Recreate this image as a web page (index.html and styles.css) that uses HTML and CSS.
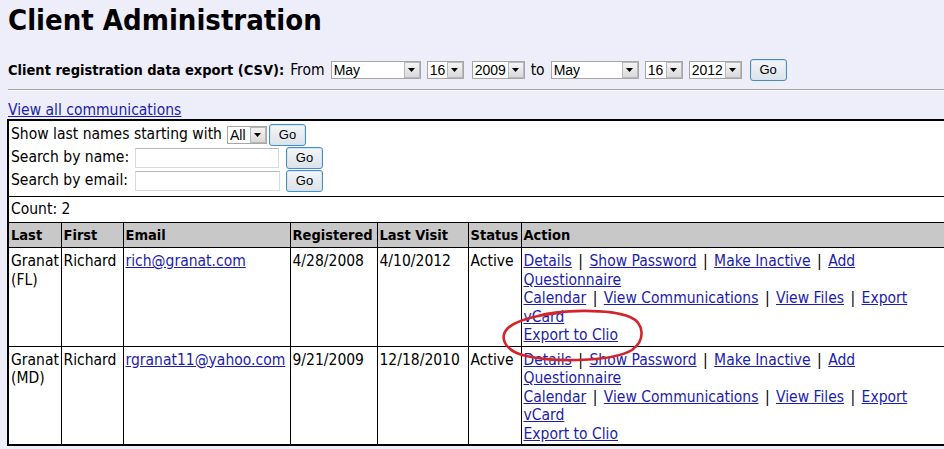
FILE: index.html
```html
<!DOCTYPE html>
<html lang="en">
<head>
<meta charset="utf-8">
<title>Client Administration</title>
<link rel="stylesheet" href="styles.css">
</head>
<body>
<h1 class="title">Client Administration</h1>

<form class="export">
  <span class="export-label">Client registration data export (CSV):</span>
  <span>From</span>
  <span class="dropdown dd-month"><select><option>May</option></select><span class="dd-btn" aria-hidden="true"><svg width="7" height="4" viewBox="0 0 7 4"><path d="M0 0H7L3.5 4Z"/></svg></span></span>
  <span class="dropdown dd-day"><select><option>16</option></select><span class="dd-btn" aria-hidden="true"><svg width="7" height="4" viewBox="0 0 7 4"><path d="M0 0H7L3.5 4Z"/></svg></span></span>
  <span class="dropdown dd-year dd-gap"><select><option>2009</option></select><span class="dd-btn" aria-hidden="true"><svg width="7" height="4" viewBox="0 0 7 4"><path d="M0 0H7L3.5 4Z"/></svg></span></span>
  <span>to</span>
  <span class="dropdown dd-month2"><select><option>May</option></select><span class="dd-btn" aria-hidden="true"><svg width="7" height="4" viewBox="0 0 7 4"><path d="M0 0H7L3.5 4Z"/></svg></span></span>
  <span class="dropdown dd-day2"><select><option>16</option></select><span class="dd-btn" aria-hidden="true"><svg width="7" height="4" viewBox="0 0 7 4"><path d="M0 0H7L3.5 4Z"/></svg></span></span>
  <span class="dropdown dd-year"><select><option>2012</option></select><span class="dd-btn" aria-hidden="true"><svg width="7" height="4" viewBox="0 0 7 4"><path d="M0 0H7L3.5 4Z"/></svg></span></span>
  <button type="button" class="btn">Go</button>
</form>

<hr class="rule">

<div class="view-all"><a href="#">View all communications</a></div>

<table class="clients">
  <colgroup>
    <col class="c-last"><col class="c-first"><col class="c-email"><col class="c-reg"><col class="c-visit"><col class="c-status"><col class="c-action">
  </colgroup>
  <tr>
    <td colspan="7" class="filters">
      <div class="filter-grid">
        <div class="filter-letter">
          <span>Show last names starting with</span>
          <span class="dropdown dd-letter"><select><option>All</option></select><span class="dd-btn" aria-hidden="true"><svg width="7" height="4" viewBox="0 0 7 4"><path d="M0 0H7L3.5 4Z"/></svg></span></span>
          <button type="button" class="btn btn-letter">Go</button>
        </div>
        <span class="filter-label">Search by name:</span>
        <input class="field" type="text">
        <button type="button" class="btn">Go</button>
        <span class="filter-label">Search by email:</span>
        <input class="field field-email" type="text">
        <button type="button" class="btn">Go</button>
      </div>
    </td>
  </tr>
  <tr>
    <td colspan="7" class="count">Count: 2</td>
  </tr>
  <tr class="head">
    <th>Last</th><th>First</th><th>Email</th><th>Registered</th><th>Last Visit</th><th>Status</th><th>Action</th>
  </tr>
  <tr class="row">
    <td>Granat (FL)</td>
    <td>Richard</td>
    <td><a href="#">rich@granat.com</a></td>
    <td>4/28/2008</td>
    <td>4/10/2012</td>
    <td>Active</td>
    <td class="actions">
      <div class="act-line"><a href="#">Details</a> <span class="sep">|</span> <a href="#">Show Password</a> <span class="sep">|</span> <a href="#">Make Inactive</a> <span class="sep">|</span> <a href="#">Add Questionnaire</a></div>
      <div class="act-line"><a href="#">Calendar</a> <span class="sep">|</span> <a href="#">View Communications</a> <span class="sep">|</span> <a href="#">View Files</a> <span class="sep">|</span> <a href="#">Export vCard</a></div>
      <div class="act-line"><a href="#">Export to Clio</a></div>
    </td>
  </tr>
  <tr class="row">
    <td>Granat (MD)</td>
    <td>Richard</td>
    <td><a href="#">rgranat11@yahoo.com</a></td>
    <td>9/21/2009</td>
    <td>12/18/2010</td>
    <td>Active</td>
    <td class="actions">
      <div class="act-line"><a href="#">Details</a> <span class="sep">|</span> <a href="#">Show Password</a> <span class="sep">|</span> <a href="#">Make Inactive</a> <span class="sep">|</span> <a href="#">Add Questionnaire</a></div>
      <div class="act-line"><a href="#">Calendar</a> <span class="sep">|</span> <a href="#">View Communications</a> <span class="sep">|</span> <a href="#">View Files</a> <span class="sep">|</span> <a href="#">Export vCard</a></div>
      <div class="act-line"><a href="#">Export to Clio</a></div>
    </td>
  </tr>
</table>

<svg class="annotation" width="150" height="58" viewBox="0 0 150 58" aria-hidden="true">
  <path d="M40 9C60 3 110 1 132 10C146 16 148 33 134 43C116 54 60 56 28 49C6 44 1 30 10 21C18 14 34 9 60 6" fill="none" stroke="#d3242b" stroke-width="2.6" stroke-linecap="round"/>
</svg>
</body>
</html>
```

FILE: styles.css
```css
html {
  overflow: hidden;
  background: #eeeefa;
}

body {
  position: relative;
  margin: 0;
  padding: 0 8px;
  width: 960px;
  font-family: "DejaVu Sans Condensed", "DejaVu Sans", sans-serif;
  font-stretch: condensed;
  font-size: 15.5px;
  line-height: 18.5px;
  color: #000;
}

a {
  color: #1d1dab;
  text-decoration: underline;
}

.title {
  margin: 3px 0 0;
  font-size: 29px;
  line-height: 34px;
  font-weight: bold;
}

.export {
  display: flex;
  align-items: center;
  gap: 6px;
  height: 22px;
  margin: 22px 0 0;
}

.export-label {
  font-weight: bold;
  font-size: 14.5px;
}

.dropdown {
  position: relative;
  display: inline-block;
  height: 18px;
  flex: none;
}

.dropdown select {
  appearance: none;
  -webkit-appearance: none;
  display: block;
  box-sizing: border-box;
  width: 100%;
  height: 18px;
  margin: 0;
  padding: 0 0 0 2px;
  border: 1px solid #a6a6a6;
  border-radius: 0;
  background: #fff;
  color: #000;
  font-family: "Liberation Sans", Arial, sans-serif;
  font-size: 14px;
  line-height: 16px;
}

.dd-btn {
  position: absolute;
  top: 1px;
  right: 1px;
  box-sizing: border-box;
  width: 16px;
  height: 16px;
  border: 1px solid #b9b9b9;
  background: linear-gradient(#f4f4f4, #d9d9d9);
  display: flex;
  align-items: center;
  justify-content: center;
  pointer-events: none;
}

.dd-btn svg {
  display: block;
  fill: #000;
}

.dd-month { width: 90px; }
.dd-month2 { width: 88px; }
.dd-day { width: 37px; }
.dd-day2 { width: 38px; }
.dd-year { width: 53px; }
.dd-letter { width: 40px; }
.dd-gap { margin-left: 2px; }

.btn {
  box-sizing: border-box;
  width: 37px;
  height: 22px;
  margin: 0;
  padding: 0;
  border: 1px solid #4a8bc2;
  border-radius: 3px;
  background: linear-gradient(#f4f6f8, #dce2e8);
  box-shadow: inset 0 0 0 1px #cfe6f6;
  color: #000;
  font-family: "Liberation Sans", Arial, sans-serif;
  font-size: 13px;
  line-height: 20px;
  flex: none;
}

.export .btn {
  margin-left: 2px;
}

.rule {
  height: 0;
  margin: 8px 0 0;
  border: 0;
  border-top: 1px solid #a3a3a8;
  border-bottom: 1px solid #fbfbff;
}

.view-all {
  margin-top: 10px;
  height: 18px;
}

.clients {
  table-layout: fixed;
  width: 953px;
  margin-left: -1px;
  border-collapse: collapse;
  border: 2px solid #000;
  background: #fff;
}

.c-last { width: 53px; }
.c-first { width: 62px; }
.c-email { width: 167px; }
.c-reg { width: 87px; }
.c-visit { width: 91px; }
.c-status { width: 53px; }
.c-action { width: 440px; }

.clients td,
.clients th {
  border: 1px solid #000;
  padding: 4px 2px 1px;
  text-align: left;
  vertical-align: top;
}

.clients .filters {
  padding: 2px 2px 4px;
}

.filter-grid {
  display: grid;
  grid-template-columns: 124px auto auto;
  grid-auto-rows: 23px;
  align-items: center;
  justify-content: start;
}

.filter-letter {
  grid-column: 1 / -1;
  display: flex;
  align-items: center;
}

.filter-letter .dropdown {
  margin-left: 5px;
}

.btn-letter {
  margin-left: 2px;
}

.field {
  box-sizing: border-box;
  width: 144px;
  height: 20px;
  margin: 0 6px 0 0;
  padding: 0 2px;
  border: 1px solid #d7dbe1;
  border-top-color: #b5b8be;
  background: #fff;
  font: 14px "Liberation Sans", Arial, sans-serif;
}

.field-email {
  width: 145px;
}

.clients .count {
  padding: 3px 2px 3px;
}

.clients .head th {
  background: #c8c8c8;
  font-weight: bold;
  font-size: 14.5px;
  padding: 3px 2px 3px;
}

.act-line {
  max-width: 410px;
}

.sep {
  padding: 0 2px;
}

.annotation {
  position: absolute;
  left: 498px;
  top: 307px;
}
```
